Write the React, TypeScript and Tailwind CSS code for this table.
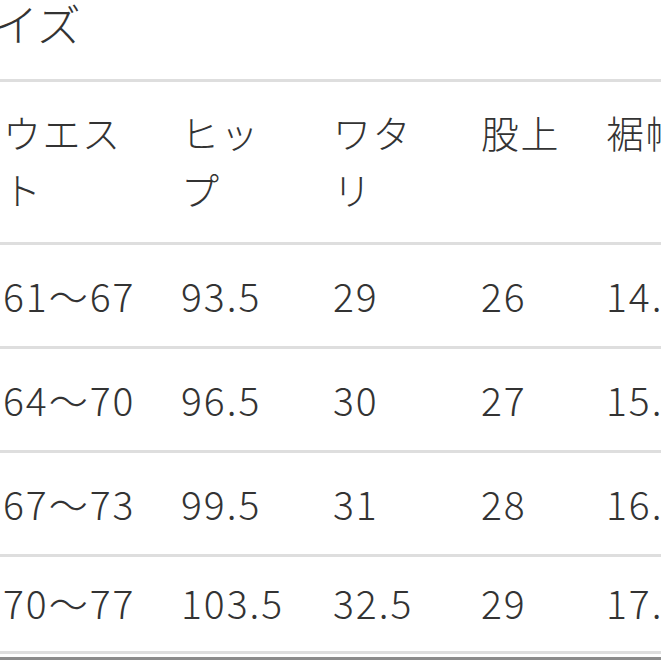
import React from "react";

// サイズ表 — 画面は左端と右端で切れている
const HEADERS = [
  { label: "ウエスト", w: "w-[178px]", pr: "pr-[28px]" },
  { label: "ヒップ", w: "w-[152px]", pr: "pr-[40px]" },
  { label: "ワタリ", w: "w-[148px]", pr: "pr-[36px]" },
  { label: "股上", w: "w-[125px]", pr: "pr-[10px]" },
  { label: "裾幅", w: "w-[160px]", pr: "pr-0" },
];

const ROWS = [
  ["61〜67", "93.5", "29", "26", "14.5"],
  ["64〜70", "96.5", "30", "27", "15.5"],
  ["67〜73", "99.5", "31", "28", "16.5"],
  ["70〜77", "103.5", "32.5", "29", "17.5"],
];

export default function App() {
  return (
    <div
      className="h-[661px] w-[661px] overflow-hidden bg-white font-light text-[#333]"
      style={{ fontFamily: '"Noto Sans CJK JP", "Noto Sans", sans-serif' }}
    >
      {/* 見出し */}
      <div className="h-[79px]">
        <h2 className="-ml-[50px] text-[44px] leading-[46px] font-light">サイズ</h2>
      </div>

      <div className="border-t-[3px] border-[#dedede]">
        {/* ヘッダー行 */}
        <div className="flex h-[163px] items-start border-b-[3px] border-[#dedede] pt-[21px] pl-[3px]">
          {HEADERS.map((h) => (
            <div key={h.label} className={`shrink-0 ${h.w} ${h.pr}`}>
              <p className="text-[38px] leading-[57px] tracking-[1.5px] break-all">{h.label}</p>
            </div>
          ))}
        </div>

        {/* データ行 */}
        {ROWS.map((row, i) => (
          <div
            key={i}
            className={`flex items-center border-b-[3px] border-[#dedede] pl-[3px] ${
              i === ROWS.length - 1 ? "h-[97px] pb-[4px]" : "h-[104px]"
            }`}
          >
            {row.map((cell, j) => (
              <div key={j} className={`shrink-0 ${HEADERS[j].w}`}>
                <p className="text-[39px] leading-[57px] tracking-[2px] whitespace-nowrap">{cell}</p>
              </div>
            ))}
          </div>
        ))}
        <div className="mt-[3px] h-[3px] bg-[#8c8c8c]" />
      </div>
    </div>
  );
}
